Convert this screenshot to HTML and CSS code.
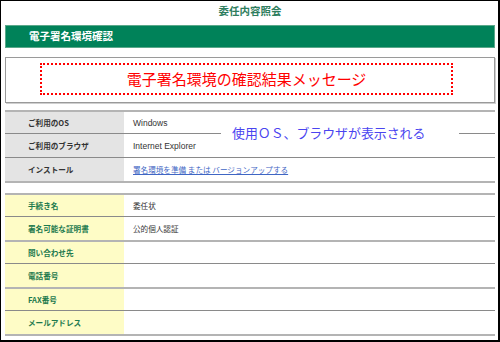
FILE: index.html
```html
<!DOCTYPE html>
<html>
<head>
    <title>委任内容照会</title>
    <link rel="stylesheet" href="styles.css">
</head>
<body>
    <div class="frame">
        <!-- タイトル -->
        <div class="title">委任内容照会</div>

        <!-- 見出しバー -->
        <div class="bar">電子署名環境確認</div>

        <!-- メッセージ欄 -->
        <div class="msg-box">
            <div class="msg-inner">電子署名環境の確認結果メッセージ</div>
        </div>

        <!-- 環境情報 -->
        <div class="table env">
            <div class="row thick">
                <div class="label">ご利用のOS</div>
                <div class="value">Windows</div>
            </div>
            <div class="row">
                <div class="label">ご利用のブラウザ</div>
                <div class="value">Internet Explorer</div>
            </div>
            <div class="row">
                <div class="label">インストール</div>
                <div class="value"><a href="#">署名環境を準備 または バージョンアップする</a></div>
            </div>
            <div class="note">使用ＯＳ、ブラウザが表示される</div>
        </div>

        <!-- 手続き情報 -->
        <div class="table proc">
            <div class="row thick">
                <div class="label">手続き名</div>
                <div class="value">委任状</div>
            </div>
            <div class="row">
                <div class="label">署名可能な証明書</div>
                <div class="value">公的個人認証</div>
            </div>
            <div class="row thick">
                <div class="label">問い合わせ先</div>
                <div class="value"></div>
            </div>
            <div class="row">
                <div class="label">電話番号</div>
                <div class="value"></div>
            </div>
            <div class="row thick">
                <div class="label">FAX番号</div>
                <div class="value"></div>
            </div>
            <div class="row">
                <div class="label">メールアドレス</div>
                <div class="value"></div>
            </div>
        </div>
    </div>
</body>
</html>
```

FILE: styles.css
```css
body {
    margin: 0;
    font-family: "Liberation Sans", "Noto Sans CJK JP", sans-serif;
    background-color: #fff;
}
.frame {
    box-sizing: border-box;
    width: 500px;
    height: 342px;
    border: 1px solid #000;
    border-right-width: 2px;
    border-bottom-width: 2px;
    padding: 0 3px 0 4px;
}
.title {
    height: 24px;
    line-height: 21px;
    text-align: center;
    font-size: 10.5px;
    font-weight: bold;
    color: #2d7d5d;
}
.bar {
    box-sizing: border-box;
    height: 23px;
    line-height: 21px;
    padding-left: 23px;
    background-color: #008259;
    border: 1px solid #5aa88a;
    color: #fff;
    font-size: 10.5px;
    font-weight: bold;
}
.msg-box {
    box-sizing: border-box;
    height: 46px;
    margin-top: 9px;
    padding-top: 5px;
    border: 1px solid #9a9a9a;
    box-shadow: 1px 1px 0 #cfcfcf;
}
.msg-inner {
    box-sizing: border-box;
    width: 413px;
    height: 32px;
    margin-left: 34px;
    border: 2px dotted #ff0000;
    text-align: center;
    line-height: 28px;
    font-family: "Noto Sans CJK JP", sans-serif;
    font-size: 15px;
    color: #ff0000;
}
.table {
    position: relative;
    border-bottom: 2px solid #b4b4b4;
}
.env {
    margin-top: 7px;
}
.proc {
    margin-top: 10px;
}
.row {
    box-sizing: border-box;
    display: grid;
    grid-template-columns: 119px 1fr;
    height: 24px;
    border-top: 1px solid #8a8a8a;
}
.row.thick {
    height: 23px;
    border-top: 2px solid #b4b4b4;
}
.label {
    display: flex;
    align-items: center;
    padding-left: 23px;
    font-family: "Noto Sans CJK JP", sans-serif;
    font-size: 7.6px;
    font-weight: bold;
}
.value {
    display: flex;
    align-items: center;
    padding-left: 9px;
    font-size: 8.5px;
    color: #333;
}
.env .label {
    background-color: #e4e4e4;
    color: #333;
}
.proc .label {
    background-color: #fefcc6;
    color: #1d7a4e;
}
.proc .value {
    font-family: "Noto Sans CJK JP", sans-serif;
    font-size: 7.6px;
}
.value a {
    font-family: "Noto Sans CJK JP", sans-serif;
    font-size: 7.6px;
    color: #3f66c4;
}
/* 説明用の注記 */
.note {
    position: absolute;
    left: 216px;
    top: 14px;
    width: 227px;
    height: 18px;
    padding-left: 11px;
    background-color: #fff;
    line-height: 18px;
    font-family: "Noto Sans CJK JP", sans-serif;
    font-size: 12.9px;
    color: #4a44f0;
}
```
